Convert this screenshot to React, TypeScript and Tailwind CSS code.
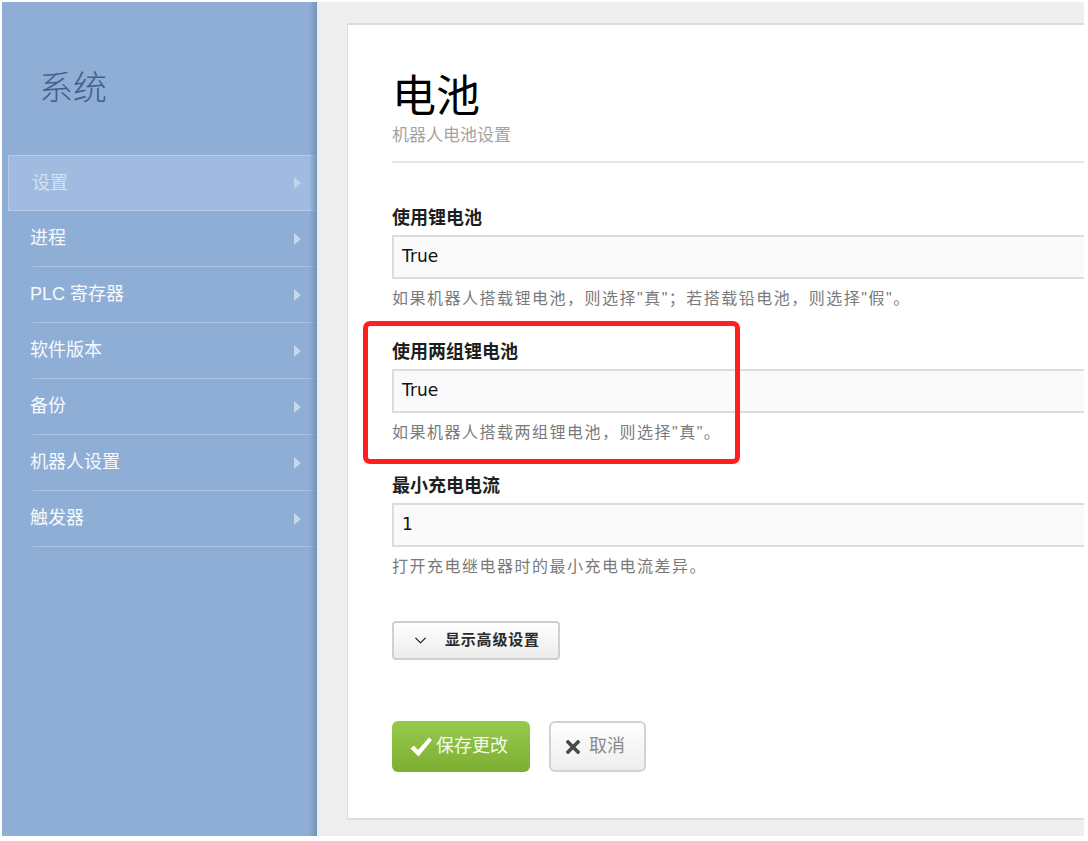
import { ChevronDown } from "lucide-react";

const menu = ["设置", "进程", "PLC 寄存器", "软件版本", "备份", "机器人设置", "触发器"];

const cjk = "font-['Liberation_Sans','Noto_Sans_CJK_SC',sans-serif]";

function Arrow({ dim }: { dim?: boolean }) {
  return (
    <svg width="7" height="12" viewBox="0 0 7 12" className="mr-[16px]">
      <path d="M0 0 L7 6 L0 12 Z" fill={dim ? "#c2d4ec" : "#c7d7ee"} />
    </svg>
  );
}

function Field({
  label,
  value,
  help,
}: {
  label: string;
  value: string;
  help: string;
}) {
  return (
    <div>
      <div className="h-6 leading-6 text-[18px] font-bold text-[#1e1e1e]">{label}</div>
      <div className="mt-[5px] h-[44px] w-[740px] border-2 border-[#dcdcdc] bg-[#fafafa] flex items-center pl-[8px]">
        <span className="font-['DejaVu_Sans',sans-serif] text-[17px] text-[#111]">{value}</span>
      </div>
      <div className="mt-[8px] h-6 leading-6 text-[16px] tracking-[1.5px] text-[#7a7a7a]">{help}</div>
    </div>
  );
}

export default function App() {
  return (
    <div className={`w-[1088px] h-[841px] bg-white overflow-hidden pl-[2px] pt-[2px] ${cjk}`}>
      <div className="flex w-[1082px] h-[834px]">
        {/* sidebar */}
        <div className="relative w-[315px] shrink-0 bg-[#8eaed6]">
          <div className="h-[153px] pl-[37px] pt-[66px]">
            <div className="text-[34px] leading-[40px] font-light text-[#42608a]">系统</div>
          </div>
          {menu.map((m, i) =>
            i === 0 ? (
              <div
                key={m}
                className="ml-[6px] h-[56px] flex items-center justify-between bg-[#a1bbe0] border-t border-l border-b border-[#b9cdea]"
              >
                <span className="pl-[23px] text-[18px] text-[#d3e1f2]">{m}</span>
                <Arrow dim />
              </div>
            ) : (
              <div key={m}>
                <div className="h-[55px] flex items-center justify-between">
                  <span className="pl-[28px] text-[18px] text-[#f6f9fd]">{m}</span>
                  <Arrow />
                </div>
                <div className="ml-[31px] h-px bg-[#adc5e5]" />
              </div>
            ),
          )}
          <div className="absolute top-0 right-0 h-full w-[8px] bg-gradient-to-r from-[#8eaed6]/0 to-[#7592b2] pointer-events-none" />
        </div>

        {/* main */}
        <div className="flex-1 bg-[#efefef] border-l-4 border-[#e6eef7] overflow-hidden">
          <div className="relative mt-[21px] ml-[26px] w-[800px] h-[797px] bg-white border-t-2 border-b-2 border-l border-[#dddddd] pl-[44px] pt-[46px]">
            <div className="text-[44px] leading-[52px] text-black">电池</div>
            <div className="mt-px text-[17px] leading-6 text-[#a3a3a3]">机器人电池设置</div>
            <div className="mt-[13px] h-[2px] bg-[#e6e6e6]" />

            <div className="mt-[43px] flex flex-col gap-[29px]">
              <Field
                label="使用锂电池"
                value="True"
                help={'如果机器人搭载锂电池，则选择"真"；若搭载铅电池，则选择"假"。'}
              />
              <Field
                label="使用两组锂电池"
                value="True"
                help={'如果机器人搭载两组锂电池，则选择"真"。'}
              />
              <Field label="最小充电电流" value="1" help="打开充电继电器时的最小充电电流差异。" />
            </div>

            <button className="mt-[42px] h-[39px] w-[168px] flex items-center rounded-[4px] border-2 border-[#d0d0d0] bg-gradient-to-b from-white to-[#ececec]">
              <ChevronDown size={19} strokeWidth={1.6} className="ml-[17px] text-[#222]" />
              <span className="ml-[15px] text-[15px] font-bold tracking-[0.8px] text-[#2a2a2a]">显示高级设置</span>
            </button>

            <div className="mt-[61px] flex gap-[19px]">
              <button className="h-[51px] w-[138px] flex items-center rounded-[6px] bg-gradient-to-b from-[#97ca4c] to-[#7bae31]">
                <svg width="24" height="22" viewBox="0 0 24 22" className="ml-[17px]">
                  <path d="M1.5 12.5 L5 9.5 L9 14 L20 1.5 L23 4 L9.5 20.5 Z" fill="#ffffff" />
                </svg>
                <span className="ml-[3px] text-[18px] text-[#f5fbea]">保存更改</span>
              </button>
              <button className="h-[51px] w-[97px] flex items-center rounded-[6px] border-2 border-[#d2d2d2] bg-gradient-to-b from-white to-[#eeeeee]">
                <svg width="14" height="14" viewBox="0 0 14 14" className="ml-[15px]">
                  <path d="M2 2 L12 12 M12 2 L2 12" stroke="#4a4a4a" strokeWidth="3.6" strokeLinecap="square" />
                </svg>
                <span className="ml-[9px] text-[18px] text-[#8a8a8a]">取消</span>
              </button>
            </div>

            {/* highlight annotation */}
            <div className="absolute left-[15px] top-[296px] w-[377px] h-[143px] rounded-[7px] border-[5px] border-[#ff1f1f] pointer-events-none" />
          </div>
        </div>
      </div>
    </div>
  );
}
